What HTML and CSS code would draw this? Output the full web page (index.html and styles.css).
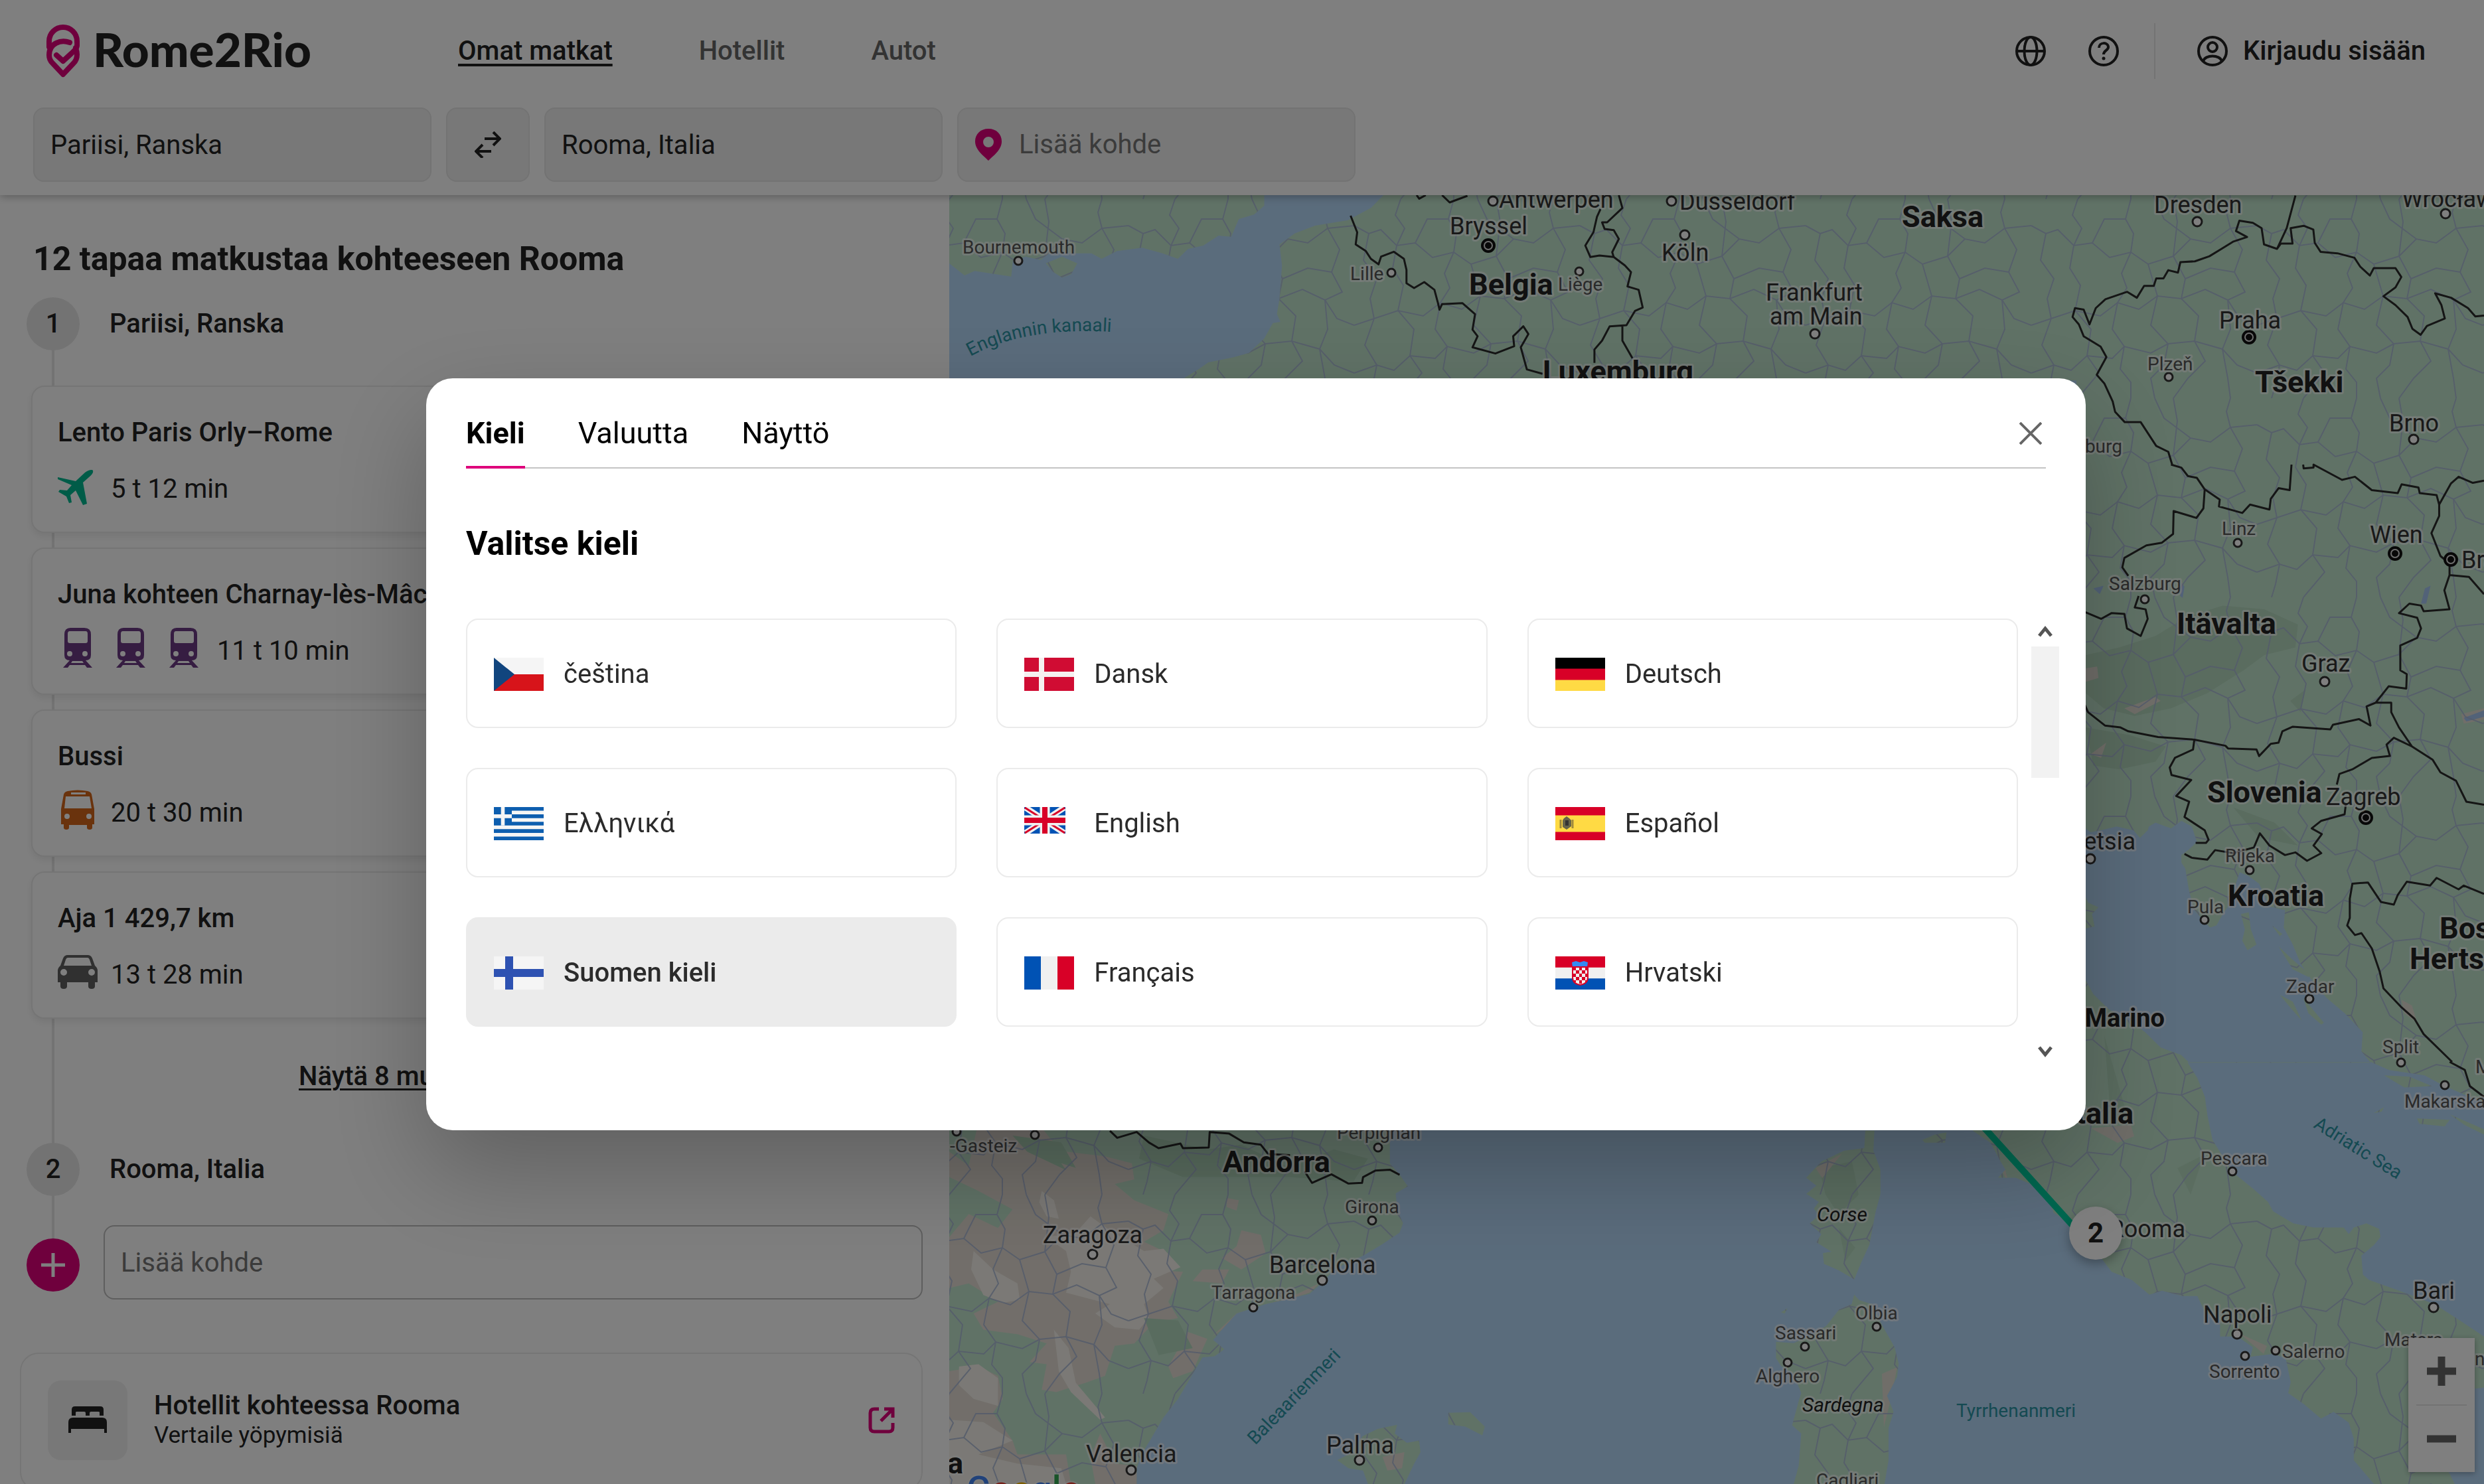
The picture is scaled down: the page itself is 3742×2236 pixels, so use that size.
FILE: index.html
```html
<!DOCTYPE html>
<html lang="fi">
<head>
<meta charset="utf-8">
<meta name="viewport" content="width=device-width, initial-scale=1">
<title>Rome2Rio: Pariisi – Rooma</title>
<link rel="stylesheet" href="styles.css">
</head>
<body>
<div class="app">
  <header class="header">
    <div class="topbar">
      <a class="logo" href="#">
        <svg class="logo-pin" viewBox="0 0 50 80" aria-hidden="true"><g fill="none" stroke="#de007b" stroke-width="8" stroke-linecap="round" stroke-linejoin="round"><path d="M4 34C3 31 4 28 4 25A21 21 0 0 1 46 25C46 29 47 31 45 35C43 39 40 41 37 44L25 55L15 46"/><path d="M35 27C22 22 4 28 4 46C4 52 6 55 9 58L25 75L41 58C45 54 46 50 46 45C46 41 45 38 44 35"/></g></svg>
        <span>Rome2Rio</span>
      </a>
      <nav class="nav">
        <a class="active" href="#">Omat matkat</a>
        <a href="#">Hotellit</a>
        <a href="#">Autot</a>
      </nav>
      <div class="tools">
        <button class="icon-button" aria-label="Kieli ja valuutta"><svg viewBox="0 0 48 48"><g fill="none" stroke="#222" stroke-width="4"><circle cx="24" cy="24" r="21"/><ellipse cx="24" cy="24" rx="9.500" ry="21"/><path d="M3 24H45"/></g></svg></button>
        <button class="icon-button" aria-label="Ohje"><svg viewBox="0 0 48 48"><g fill="none" stroke="#222" stroke-width="4"><circle cx="24" cy="24" r="21"/><path d="M17 19C17 10 31 10 31 18C31 23 24 23 24 29"/></g><circle cx="24" cy="35" r="2.500" fill="#222"/></svg></button>
        <span class="divider"></span>
        <button class="login"><svg viewBox="0 0 48 48"><g fill="none" stroke="#222" stroke-width="4"><circle cx="24" cy="24" r="21"/><circle cx="24" cy="18" r="7"/><path d="M10 39C13 29 35 29 38 39"/></g></svg>Kirjaudu sisään</button>
      </div>
    </div>
    <form class="search">
      <input class="field" type="text" aria-label="Lähtöpaikka" value="Pariisi, Ranska">
      <button class="swap" type="button" aria-label="Vaihda suunta"><svg viewBox="0 0 40 40"><path d="M15 11H38M28 1L38 11L28 21M25 30H2M12 20L2 30L12 40" fill="none" stroke="#222" stroke-width="4"/></svg></button>
      <input class="field" type="text" aria-label="Määränpää" value="Rooma, Italia">
      <label class="field field-add"><svg viewBox="0 0 42 48" aria-hidden="true"><path fill="#de007b" fill-rule="evenodd" d="M21 0C9 0 1 8 1 19C1 32 14 41 21 48C28 41 41 32 41 19C41 8 33 0 21 0ZM21 12A8 8 0 1 1 21 28A8 8 0 1 1 21 12Z"/></svg><input type="text" placeholder="Lisää kohde" aria-label="Lisää kohde"></label>
    </form>
  </header>

  <div class="content">
    <main class="panel">
      <h1>12 tapaa matkustaa kohteeseen Rooma</h1>
      <div class="timeline">
        <div class="stop"><span class="bullet">1</span>Pariisi, Ranska</div>
        <ul class="routes">
          <li class="route"><h2>Lento Paris Orly–Rome</h2>
            <p><svg viewBox="0 0 60 60"><path fill="#00b890" d="M0 12L27 18L41 5C46 1 52 0 53 2C54 5 51 9 47 12L38 20L44 52L38 54L27 32L19 39L21 50L17 51L13 41L1 34L3 31L14 32L21 24L0 15Z"/></svg>5 t 12 min</p></li>
          <li class="route"><h2>Juna kohteen Charnay-lès-Mâcon</h2>
            <p>
              <svg viewBox="0 0 60 60"><path fill="#6c3a84" fill-rule="evenodd" d="M19-5H40Q50-5 50 5V36Q50 44 42 44L52 55H44L41 51H18L15 55H8L18 44Q10 44 10 36V5Q10-5 19-5ZM18 0Q15 0 15 4V15Q15 18 18 18H42Q45 18 45 15V4Q45 0 42 0ZM18 30A4 4 0 1 0 18 38A4 4 0 1 0 18 30ZM41 30A4 4 0 1 0 41 38A4 4 0 1 0 41 30ZM22 45L20 48H39L37 45Z"/></svg>
              <svg viewBox="0 0 60 60"><path fill="#6c3a84" fill-rule="evenodd" d="M19-5H40Q50-5 50 5V36Q50 44 42 44L52 55H44L41 51H18L15 55H8L18 44Q10 44 10 36V5Q10-5 19-5ZM18 0Q15 0 15 4V15Q15 18 18 18H42Q45 18 45 15V4Q45 0 42 0ZM18 30A4 4 0 1 0 18 38A4 4 0 1 0 18 30ZM41 30A4 4 0 1 0 41 38A4 4 0 1 0 41 30ZM22 45L20 48H39L37 45Z"/></svg>
              <svg viewBox="0 0 60 60"><path fill="#6c3a84" fill-rule="evenodd" d="M19-5H40Q50-5 50 5V36Q50 44 42 44L52 55H44L41 51H18L15 55H8L18 44Q10 44 10 36V5Q10-5 19-5ZM18 0Q15 0 15 4V15Q15 18 18 18H42Q45 18 45 15V4Q45 0 42 0ZM18 30A4 4 0 1 0 18 38A4 4 0 1 0 18 30ZM41 30A4 4 0 1 0 41 38A4 4 0 1 0 41 30ZM22 45L20 48H39L37 45Z"/></svg>
              11 t 10 min</p></li>
          <li class="route"><h2>Bussi</h2>
            <p><svg viewBox="0 0 60 60"><path fill="#d4661a" fill-rule="evenodd" d="M9 2Q10-2 15-3Q30-6 45-3Q50-2 51 2L55 24V47H52V52Q52 55 48 55Q44 55 44 52V48H17V52Q17 55 13 55Q9 55 9 52V47H5V24ZM20-1V2H42V-1ZM12 5L10 23H51L48 5ZM14 31A4 4 0 1 0 14 39A4 4 0 1 0 14 31ZM47 31A4 4 0 1 0 47 39A4 4 0 1 0 47 31Z"/></svg>20 t 30 min</p></li>
          <li class="route"><h2>Aja 1 429,7 km</h2>
            <p><svg viewBox="0 0 60 60"><path fill="#606060" fill-rule="evenodd" d="M15 0H45Q50 0 52 5L56 16Q60 19 60 24V41H56V47Q56 51 51 51Q46 51 46 47V41H14V47Q14 51 9 51Q4 51 4 47V41H0V24Q0 19 4 16L8 5Q10 0 15 0ZM15 4Q13 4 12 7L9 16H51L48 7Q47 4 45 4ZM9 21A5 5 0 1 0 9 31A5 5 0 1 0 9 21ZM51 21A5 5 0 1 0 51 31A5 5 0 1 0 51 21Z"/></svg>13 t 28 min</p></li>
        </ul>
        <a class="more" href="#">Näytä 8 muuta vaihtoehtoa</a>
        <div class="stop"><span class="bullet">2</span>Rooma, Italia</div>
        <div class="add-stop">
          <button class="add" aria-label="Lisää kohde"><svg viewBox="0 0 36 36"><path d="M18 0V36M0 18H36" stroke="#fff" stroke-width="5"/></svg></button>
          <input type="text" placeholder="Lisää kohde" aria-label="Uusi kohde">
        </div>
      </div>
      <a class="hotel" href="#">
        <span class="hotel-tile"><svg viewBox="0 0 60 42"><path fill="#222" d="M6 14V5Q6 0 11 0H49Q54 0 54 5V14H48V9Q48 8 46 8H35Q33 8 33 10V14H27V10Q27 8 25 8H14Q12 8 12 9V14ZM8 17H52Q59 17 59 24V40H55V34H5V40H1V24Q1 17 8 17Z"/></svg></span>
        <span class="hotel-text"><strong>Hotellit kohteessa Rooma</strong><span>Vertaile yöpymisiä</span></span>
        <svg class="external" viewBox="0 0 40 40"><path d="M16 3H9Q3 3 3 9V31Q3 37 9 37H31Q37 37 37 31V24M24 3H37V16M37 3L19 21" fill="none" stroke="#de007b" stroke-width="5"/></svg>
      </a>
    </main>

    <section class="map" aria-label="Kartta">
      <svg class="map-canvas" viewBox="1430 294 2312 1942" preserveAspectRatio="xMinYMin slice">
        <defs>
          <clipPath id="land">
            <path transform="translate(1430 290) scale(.7653 .3333)" d="M0 0H620V60L600 100L570 120L555 200L530 195L500 240L470 255L450 300L420 275L380 250L330 265L300 300L280 275L250 275L200 270L180 305L150 290L125 310L122 380L50 355L30 375L0 320ZM190 320L222 290L252 320L240 370L222 385L205 360ZM860 0L830 70L785 125L720 150L680 185L650 235L655 330L650 480L645 550L652 585L637 590L620 660L590 725L560 745L510 768L490 800L455 850L2222 850V0Z"/>
            <path transform="translate(3130 700) scale(.3903 .574)" clip-rule="evenodd" d="M-5-710H1580V1569H-5ZM20 950L50 965L100 958L150 950L215 960L240 980L270 960L275 950L300 940L360 955L400 935L440 950L460 990L430 1010L400 1025L400 1045L415 1060L430 1120L450 1170L510 1215L535 1210L560 1180L590 1150L610 1100L625 1070L660 1080L700 1100L740 1160L800 1170L795 1215L830 1260L860 1310L900 1350L960 1400L1030 1440L1100 1490L1095 1540L1130 1570H430L400 1550L320 1530L260 1490L200 1460L120 1430L60 1390L20 1340V1220L65 1212L55 1180L80 1162L40 1150L20 1120Z"/>
            <path transform="translate(3130 700) scale(.3903 .574)" d="M630 1180L660 1175L668 1220L690 1260L655 1275L635 1250L645 1220ZM750 1210L790 1232L780 1238ZM775 1265L830 1300L900 1340L890 1345L830 1325ZM780 1392L830 1410L865 1460L820 1425ZM870 1400L950 1465L940 1470L890 1440Z"/>
            <path transform="translate(2550 1600) scale(.7602 .4056)" d="M555 0H980L1000 60L1015 130L1020 200L1030 290L1050 350L1070 410L1110 470L1140 520L1150 555L1190 600L1230 615L1290 615L1300 640L1310 615L1335 600L1360 620L1363 650L1350 680L1325 720L1328 790L1340 810L1400 850L1470 900L1520 960L1568 1020V1210L1520 1220L1470 1300L1450 1400L1500 1530L1510 1568H1350L1310 1480L1310 1400L1300 1340L1270 1300L1245 1325L1210 1270L1180 1230L1185 1190L1175 1100L1150 1085L1105 1095L1110 1060L1080 1020L1045 1020V960L1015 930L1000 870H970L930 850L905 865L870 810L830 780L790 680L740 590L715 560L710 530L690 470L640 430L605 430L620 400L610 370L590 300L555 256ZM342 256H360L358 330L372 400V490L362 560L350 680L335 740L320 808L290 775L260 750L258 710L275 705L245 670L255 640L232 600L250 570L240 545L250 520L225 490L245 460L225 430L240 400L255 370L300 330L340 320ZM320 865L330 885L355 900L370 960L385 1010L400 1060L408 1120L405 1170L385 1240L398 1300L388 1360V1480L380 1568H200L210 1500L215 1380L197 1350L210 1260L215 1230L200 1160L175 1130L165 1100V1040L200 1045L240 1010L265 980L290 920L315 900ZM455 290L480 270L503 262L500 300L460 300ZM1343 0H1568V150L1540 130L1490 90L1450 50L1380 30ZM1370 50L1420 55L1465 90L1410 95ZM1435 210L1500 215L1490 240L1440 230ZM1500 195L1568 250V270L1530 235ZM1350 190L1370 168L1365 185ZM175 930L188 915L182 935Z"/>
            <path transform="translate(1430 1690) scale(.7334 .3482)" d="M0 0H905V180L925 230L942 280L917 310L920 380L932 440L925 480L890 530L850 580L790 640L770 690L740 745L650 790L590 830L560 900L542 945L565 985L545 1015L520 1020L495 1110L470 1200L440 1280L415 1370L395 1440L385 1500V1568H0ZM850 1360L880 1330L920 1312L915 1350L940 1390L965 1380L968 1430L955 1480L935 1568H860L850 1510L820 1500L797 1465L820 1440ZM1025 1260L1070 1257L1100 1320L1095 1358L1060 1320L1025 1310Z"/>
          </clipPath>
          <pattern id="roads" width="340" height="300" patternUnits="userSpaceOnUse">
            <g fill="none" stroke="#a9b8d6" stroke-width="2" opacity=".85">
              <path d="M0 40L22 52L40 46L64 70L92 66L118 88L150 80L176 98L214 86L240 60L270 66L300 44L340 40"/>
              <path d="M70 0L62 24L76 44L64 70L58 104L74 130L66 168L90 196L84 236L102 262L70 300"/>
              <path d="M214 0L220 34L214 86L232 120L226 150L252 176L246 214L262 244L236 270L214 300"/>
              <path d="M0 190L30 180L66 168L104 176L130 156L162 166L190 146L226 150L262 136L296 152L314 180L340 190"/>
              <path d="M150 0L142 30L154 52L150 80L136 112L144 134L130 156L122 196L140 222L134 256L150 276L150 300"/>
              <path d="M0 262L34 250L60 258L84 236L122 240L140 222L180 232L206 218L246 214L288 226L310 250L340 262"/>
              <path d="M300 0L294 20L300 44L318 76L306 110L322 140L296 152L300 196L288 226L296 270L300 300"/>
              <path d="M22 52L14 92L34 120L24 150L30 180L16 220L34 250L28 280L22 300"/>
              <path d="M176 98L190 146L180 190L206 218L200 250L180 270L186 300M186 0L200 30L240 60M92 66L110 30L142 30M232 120L270 104L306 110"/>
            </g>
          </pattern>
        </defs>

        <rect x="1430" y="294" width="2312" height="1942" fill="#b5d8f8"/>
        <g clip-path="url(#land)">
          <rect x="1430" y="290" width="2312" height="1946" fill="#c1e5cd"/>
          <g transform="translate(1430 1690) scale(.7334 .3482)">
            <path fill="#e4ddd4" d="M60 0H180L210 80L240 130L320 150L375 180L380 250L340 270L380 340L450 400L440 470L400 520L440 560L410 640L480 650L450 780L470 850L420 870L380 960L340 970L320 1100L280 1130L220 1170L190 1160L200 1050L165 1040L200 960L140 920L70 900L50 830L100 780L40 700L0 720V500L40 400L100 460L130 380L60 300L0 240V130L40 190ZM600 470L640 490L650 570L600 640L560 590L590 540ZM520 640L575 640L560 700L500 690ZM490 910L530 940L500 1080L460 1110L450 1060ZM590 830L700 760L760 700L740 740L650 800L560 900L540 930ZM890 1450L935 1430L930 1500L900 1510ZM0 1080L60 1060L100 1100L110 1200L90 1260L130 1380L140 1440L240 1440L250 1568H0ZM310 1350L340 1480L385 1490V1568H300L290 1450ZM570 330L595 340L590 385L570 370Z"/>
            <path fill="#f6f3ec" d="M290 410L330 470L400 560L440 550L475 630L420 680L440 720L400 790L410 850L390 900L340 890L300 830L330 790L240 740L250 650L240 560L200 500L260 480ZM50 560L90 640L140 700L145 770L110 785L70 750L45 640ZM190 300L215 340L225 420L200 410L185 350ZM215 900L245 980L260 1130L320 1280L310 1290L250 1170L225 1080ZM20 1060L60 1050L100 1110L100 1230L50 1200L20 1140ZM0 1290L70 1300L130 1380L60 1440L140 1480L230 1500L240 1568H0Z"/>
            <path fill="#b3d9be" d="M130 60L230 90L260 200L230 180L240 210L160 130ZM400 60L530 120L600 100L700 200L790 120L860 160L830 260L700 240L560 240L480 240L390 160ZM400 850L470 860L500 980L430 1010Z"/>
          </g>
          <g transform="translate(3130 700) scale(.3903 .574)">
            <path fill="#b4d8be" d="M31 500L160 480L300 450L420 400L560 370L720 380L850 420L840 480L720 500L640 540L500 600L360 640L220 660L100 640L31 600ZM31 690L200 710L340 740L300 780L160 800L60 790ZM600 900L760 940L850 1000L700 980ZM820 620L880 590L860 650Z"/>
            <path fill="#e0dcd2" d="M31 535L75 530L80 560L31 570ZM180 640L300 610L320 620L220 655ZM50 760L110 730L90 770ZM1250 1405L1290 1420L1310 1465L1260 1440ZM1480 655L1568 640V670L1490 680Z"/>
            <path fill="#a5c4f0" d="M1325 365L1340 325L1362 318L1345 365ZM60 325L100 318L85 340ZM1490 665L1568 645V662L1500 674ZM400 310L412 320L405 350L395 345Z"/>
          </g>
          <path fill="#b6dbc1" d="M2740 1760L2790 1750L2800 1800L2770 1830L2750 1800ZM2770 1850L2795 1880L2780 1900ZM3170 1560L3210 1700L3180 1690ZM3280 1760L3320 1740L3300 1800Z"/>
          <path fill="#e0dcd2" d="M2993 1720L3020 1760L3028 1790L3010 1750ZM3150 1700L3210 1695L3215 1712L3190 1722ZM2735 1760L2775 1738L2745 1775ZM3375 2010L3415 2028L3410 2040ZM2835 2070L2858 2060L2848 2110L2838 2150Z"/>
          <rect x="1430" y="290" width="2312" height="1946" fill="url(#roads)"/>
        </g>

        <g class="borders">
          <path transform="translate(1430 290) scale(.7653 .3333)" d="M790 105L803 180L800 235L820 265L830 300L845 325L850 290L875 268L895 300L900 350V410L915 432L935 405L955 440L962 500L965 530L970 505L1010 500L1035 550L1030 620L1040 650L1030 700L1075 728L1112 695L1110 650L1130 605L1140 640L1125 700L1137 800L1168 820M920 12L925 28L938 12M970 12L985 45L1020 15M1318 12L1325 70L1295 135L1285 135L1290 165L1308 170L1318 210L1305 270L1308 292L1280 285L1262 292L1252 240L1268 180L1275 110L1282 75M1308 292L1330 330L1342 360L1335 425L1357 440L1365 520L1350 535L1333 600L1300 605L1285 670L1270 710V770M1325 600V670L1345 750"/>
          <path transform="translate(2600 0) scale(.7283 .4464)" d="M1178 660L1160 770L1140 840L1113 825L1108 770L1090 752L1062 745L1055 780L1078 800L1050 815L1025 840L1000 865L970 882L940 885L935 920L915 912L905 940L890 940L885 965L865 965L850 1005L830 985L785 1010L765 1040L752 1095L740 1045L722 1040L717 1070L730 1095L740 1135L775 1170L787 1205L767 1265L783 1295L800 1355L805 1390L825 1425H858L890 1505L915 1525L923 1568M1140 840L1148 822H1172L1168 770L1195 762L1215 775L1218 820L1230 850L1265 855L1300 870L1312 900L1332 930L1340 905L1385 905L1397 935L1385 970L1360 1000L1385 1030L1410 1070L1420 1110L1437 1130L1450 1100L1487 1075L1480 1030L1467 990L1500 1005L1535 1040L1550 1068L1568 1065"/>
          <path transform="translate(3130 700) scale(.3903 .574)" d="M360 0L400 8L425 30L460 35L490 65L548 92L545 110L635 127L665 105L740 118L745 90L775 62L818 67L825 0M870 0L872 10L910 8V0L1020 40L1070 32L1135 67L1235 75L1250 52L1315 60L1320 75L1385 80L1395 105V135L1365 180L1400 240L1435 260V290L1415 330L1435 380L1335 385L1325 370L1280 365L1240 390L1310 402L1325 430L1310 455L1245 475V540L1270 550L1268 588L1200 582L1150 625L1115 635L1130 685L1085 668L985 683L975 695L830 688L790 700L775 730L745 733L700 765L690 748L580 745L570 738L450 722L310 715L195 700L165 690L105 685L40 650L20 620M1395 105L1440 50L1470 32L1525 48L1568 42M1435 290L1510 295L1568 340M490 65L485 115L458 140L370 122L368 182L325 205L265 212L180 245L172 270L195 292M235 345L220 375L262 380L270 405L243 450L190 430L180 392L130 390L90 405L20 385M450 722L445 748L375 770L355 795L362 815L438 828L380 870L430 885L412 925L490 960L505 985L495 993H455M412 1022L440 1032L500 1037L530 1012L600 1020L680 1005L703 968L740 1000L800 1025L840 1018L885 1040L940 1020L910 1000L942 970L903 955L940 935L1030 918L1035 890M1000 840L1010 812L1060 800L1135 770L1205 765L1192 735L1220 717L1290 740L1370 775L1400 808L1460 830L1500 885L1568 893M1150 625H1210V650L1240 690L1290 740M1568 1127L1490 1105L1470 1115L1385 1085L1360 1105L1270 1095L1235 1130L1220 1155L1170 1148L1120 1097L1060 1100L1050 1140V1190L1040 1210L1070 1235L1095 1230L1135 1270L1165 1330L1180 1375L1250 1425L1300 1455L1335 1495L1445 1568"/>
          <path transform="translate(2550 1600) scale(.7602 .4056)" d="M1500 0L1530 30L1540 90L1568 130"/>
          <path transform="translate(1430 1690) scale(.7334 .3482)" d="M330 40L345 70L385 45L410 90L430 115L475 95L480 115L533 112L535 45L575 52L605 90L640 100L655 140L700 145M730 215L745 265L785 228L820 268L848 265L850 240L875 212L905 208L925 230"/>
        </g>

        <path d="M2960 1667L3150 1877" stroke="#00d2a2" stroke-width="10"/>

        <g class="dots">
          <circle cx="1534" cy="393" r="6"/><circle cx="2096" cy="411" r="6"/><circle cx="2379" cy="409" r="6"/><circle cx="2249" cy="303" r="7"/><circle cx="2518" cy="303" r="7"/><circle cx="2538" cy="354" r="7"/>
          <circle cx="3310" cy="334" r="7"/><circle cx="3684" cy="322" r="7"/><circle cx="2734" cy="503" r="7"/><circle cx="3267" cy="568" r="6"/><circle cx="3636" cy="662" r="7"/><circle cx="3371" cy="818" r="6"/><circle cx="3231" cy="903" r="6"/><circle cx="3502" cy="1027" r="7"/><circle cx="3149" cy="1294" r="7"/><circle cx="3389" cy="1311" r="6"/><circle cx="3321" cy="1386" r="6"/><circle cx="3479" cy="1505" r="6"/><circle cx="3617" cy="1601" r="6"/><circle cx="3683" cy="1635" r="6"/><circle cx="3363" cy="1765" r="6"/><circle cx="2827" cy="1999" r="6"/><circle cx="2719" cy="2029" r="6"/><circle cx="2693" cy="2053" r="6"/><circle cx="3370" cy="2010" r="7"/><circle cx="3666" cy="1970" r="7"/><circle cx="3428" cy="2035" r="6"/><circle cx="3382" cy="2043" r="6"/>
          <circle cx="1441" cy="1705" r="6"/><circle cx="1559" cy="1710" r="6"/><circle cx="2076" cy="1729" r="6"/><circle cx="2067" cy="1839" r="6"/><circle cx="1646" cy="1890" r="7"/><circle cx="1992" cy="1929" r="7"/><circle cx="1888" cy="1970" r="6"/><circle cx="1704" cy="2215" r="7"/><circle cx="2048" cy="2200" r="7"/>
        </g>
        <g class="capitals">
          <circle cx="2242" cy="370" r="9"/><circle cx="3388" cy="508" r="9"/><circle cx="3608" cy="834" r="9"/><circle cx="3692" cy="843" r="9"/><circle cx="3564" cy="1232" r="9"/>
        </g>
        <g class="capital-cores">
          <circle cx="2242" cy="370" r="5"/><circle cx="3388" cy="508" r="5"/><circle cx="3608" cy="834" r="5"/><circle cx="3692" cy="843" r="5"/><circle cx="3564" cy="1232" r="5"/>
        </g>

        <g class="town">
          <text x="1450" y="382">Bournemouth</text><text x="2034" y="422">Lille</text><text x="2347" y="438">Liège</text><text x="3235" y="558">Plzeň</text><text x="3197" y="682" text-anchor="end">Regensburg</text><text x="3347" y="806">Linz</text><text x="3177" y="889">Salzburg</text>
          <text x="3352" y="1299">Rijeka</text><text x="3295" y="1376">Pula</text><text x="3444" y="1496">Zadar</text><text x="3589" y="1587">Split</text><text x="3622" y="1669">Makarska</text><text x="3729" y="1617">Mostar</text><text x="3315" y="1755">Pescara</text>
          <text x="2795" y="1988">Olbia</text><text x="2674" y="2018">Sassari</text><text x="2645" y="2083">Alghero</text><text x="2736" y="2240">Cagliari</text><text x="3438" y="2046">Salerno</text><text x="3328" y="2076">Sorrento</text><text x="3592" y="2028">Matera</text><text x="3728" y="2057">nto</text>
          <text x="1431" y="1736">-Gasteiz</text><text x="2014" y="1716">Perpignan</text><text x="2026" y="1828">Girona</text><text x="1825" y="1957">Tarragona</text>
        </g>
        <g class="island"><text x="2737" y="1840">Corse</text><text x="2715" y="2127">Sardegna</text></g>
        <g class="city">
          <text x="2184" y="353">Bryssel</text><text x="2258" y="313">Antwerpen</text><text x="2530" y="316">Düsseldorf</text><text x="2503" y="393">Köln</text><text x="3245" y="321">Dresden</text><text x="3618" y="312">Wrocław</text><text x="2660" y="453">Frankfurt</text><text x="2666" y="489">am Main</text><text x="3343" y="495">Praha</text><text x="3599" y="650">Brno</text><text x="3570" y="818">Wien</text><text x="3708" y="856">Bratislava</text><text x="3467" y="1012">Graz</text><text x="3504" y="1213">Zagreb</text><text x="3217" y="1280" text-anchor="end">Venetsia</text>
          <text x="3292" y="1864" text-anchor="end">Rooma</text><text x="3319" y="1993">Napoli</text><text x="3635" y="1957">Bari</text><text x="1571" y="1873">Zaragoza</text><text x="1912" y="1918">Barcelona</text><text x="1636" y="2203">Valencia</text><text x="1998" y="2190">Palma</text>
        </g>
        <g class="country">
          <text x="2865" y="342">Saksa</text><text x="2213" y="444">Belgia</text><text x="2324" y="575">Luxemburg</text><text x="3397" y="591">Tšekki</text><text x="3279" y="955">Itävalta</text><text x="3325" y="1209">Slovenia</text><text x="3356" y="1365">Kroatia</text><text x="3675" y="1414">Bosnia ja</text><text x="3630" y="1460">Hertsegovina</text><text x="3214" y="1693" text-anchor="end">Italia</text><text x="1842" y="1766">Andorra</text><text x="1451" y="2220" text-anchor="end">Espanja</text>
          <text class="microstate" x="3261" y="1547" text-anchor="end">San Marino</text>
        </g>
        <g class="sea">
          <path id="channel" d="M1462 537Q1550 488 1700 502" fill="none"/>
          <text><textPath href="#channel">Englannin kanaali</textPath></text>
          <text transform="translate(3484 1698) rotate(32)">Adriatic Sea</text>
          <text transform="translate(1891 2178) rotate(-46)">Baleaarienmeri</text>
          <text x="2947" y="2135">Tyrrhenanmeri</text>
        </g>
        <text class="google" x="1456" y="2262"><tspan fill="#4285f4">G</tspan><tspan fill="#ea4335">o</tspan><tspan fill="#fbbc05">o</tspan><tspan fill="#4285f4">g</tspan><tspan fill="#34a853">l</tspan><tspan fill="#ea4335">e</tspan></text>
        <circle class="pin" cx="3157" cy="1858" r="40"/>
        <text class="pin-label" x="3157" y="1872">2</text>
      </svg>
      <div class="zoom">
        <button aria-label="Lähennä"><svg viewBox="0 0 44 44"><path d="M22 0V44M0 22H44" stroke="#666" stroke-width="11"/></svg></button>
        <button aria-label="Loitonna"><svg viewBox="0 0 44 44"><path d="M0 22H44" stroke="#666" stroke-width="11"/></svg></button>
      </div>
    </section>
  </div>
</div>

<div class="overlay">
  <section class="modal" role="dialog" aria-modal="true" aria-label="Asetukset">
    <div class="modal-head">
      <div class="tabs" role="tablist">
        <button class="tab active" role="tab" aria-selected="true">Kieli</button>
        <button class="tab" role="tab">Valuutta</button>
        <button class="tab" role="tab">Näyttö</button>
      </div>
      <button class="close" aria-label="Sulje"><svg viewBox="0 0 34 34"><path d="M1 1L33 33M33 1L1 33" stroke="#666" stroke-width="4"/></svg></button>
    </div>
    <h2>Valitse kieli</h2>
    <div class="languages">
      <div class="grid">
        <button class="language"><svg class="flag" viewBox="0 0 75 50"><path fill="#f5f5f5" d="M0 0H75V25H0Z"/><path fill="#d7141a" d="M0 25H75V50H0Z"/><path fill="#11457e" d="M0 0L31 25L0 50Z"/></svg>čeština</button>
        <button class="language"><svg class="flag" viewBox="0 0 75 50"><path fill="#d00c33" d="M0 0H75V50H0Z"/><path stroke="#f5f0f0" stroke-width="8" d="M26 0V50M0 25H75"/></svg>Dansk</button>
        <button class="language"><svg class="flag" viewBox="0 0 75 50"><path d="M0 0H75V17H0Z"/><path fill="#d80027" d="M0 16.500H75V34H0Z"/><path fill="#ffda44" d="M0 33.500H75V50H0Z"/></svg>Deutsch</button>
        <button class="language"><svg class="flag" viewBox="0 0 75 50"><path fill="#f5f5f5" d="M0 0H75V50H0Z"/><path fill="#0d5eaf" d="M0 0H75V5.500H0ZM0 11.100H75V16.700H0ZM0 22.200H75V27.800H0ZM0 33.300H75V38.900H0ZM0 44.500H75V50H0ZM0 0H27V27.800H0Z"/><path stroke="#f5f5f5" stroke-width="5.600" d="M13.500 0V27.800M0 13.900H27"/></svg>Ελληνικά</button>
        <button class="language"><svg class="flag" viewBox="0 0 75 50"><path fill="#0052b4" d="M0 0H62V40H0Z"/><path stroke="#f0f0f0" stroke-width="9" d="M2 1L60 39M60 1L2 39"/><path stroke="#d80027" stroke-width="3" d="M1 1L61 39M61 1L1 39"/><path stroke="#f0f0f0" stroke-width="15" d="M31 0V40M0 20H62"/><path stroke="#d80027" stroke-width="8" d="M31 0V40M0 20H62"/><path fill="#fff" d="M62 0H75V50H0V40H62Z"/></svg>English</button>
        <button class="language"><svg class="flag" viewBox="0 0 75 50"><path fill="#d80027" d="M0 0H75V50H0Z"/><path fill="#ffda44" d="M0 12.500H75V37.500H0Z"/><path fill="#66644a" d="M13 17L17 14L21 17L24 20V29L17 34L11 30V20Z"/><path stroke="#a08a3c" stroke-width="3" d="M8 19V32M26 19V32"/><path fill="#333" d="M15 20H20V28H15Z"/></svg>Español</button>
        <button class="language selected"><svg class="flag" viewBox="0 0 75 50"><path fill="#f5f5f5" d="M0 0H75V50H0Z"/><path stroke="#2e52b2" stroke-width="12" d="M23 0V50M0 25H75"/></svg>Suomen kieli</button>
        <button class="language"><svg class="flag" viewBox="0 0 75 50"><path fill="#f0f0f0" d="M0 0H75V50H0Z"/><path fill="#0052b4" d="M0 0H25V50H0Z"/><path fill="#d80027" d="M50 0H75V50H50Z"/></svg>Français</button>
        <button class="language"><svg class="flag" viewBox="0 0 75 50"><path fill="#f0f0f0" d="M0 0H75V50H0Z"/><path fill="#d80027" d="M0 0H75V16.700H0Z"/><path fill="#0052b4" d="M0 33.300H75V50H0Z"/><path fill="#338af3" d="M25 9L31 7L37 9L43 7L49 9L48 16H26Z"/><path fill="#f0f0f0" stroke="#d80027" stroke-width="2" d="M26 16H49V32Q49 41 37.500 43Q26 41 26 32Z"/><path fill="#d80027" d="M26 16H31V21H26ZM36 16H40V21H36ZM45 16H49V21H45ZM31 21H36V26H31ZM40 21H45V26H40ZM26 26H31V31H26ZM36 26H40V31H36ZM45 26H49V31H45ZM31 31H36V36H31ZM40 31H45V36H40ZM36 36H40V41H36ZM27 36H31V39H27ZM45 36H48V39H45Z"/></svg>Hrvatski</button>
      </div>
      <div class="scrollbar">
        <svg viewBox="0 0 24 18"><path d="M3 16L12 5L21 16" fill="none" stroke="#555" stroke-width="5"/></svg>
        <span class="thumb"></span>
        <svg class="down" viewBox="0 0 24 18"><path d="M3 2L12 13L21 2" fill="none" stroke="#555" stroke-width="5"/></svg>
      </div>
    </div>
  </section>
</div>
</body>
</html>
```
FILE: styles.css
```css
* { box-sizing: border-box; }

body {
  margin: 0;
  height: 100vh;
  overflow: hidden;
  font-family: Roboto, "Noto Sans", sans-serif;
  font-size: 40px;
  line-height: 50px;
  color: #222;
  background: #fff;
}

button, input { font: inherit; color: inherit; }
button { padding: 0; border: 0; background: none; }
a { color: inherit; text-decoration: none; }
h1, h2, p, ul { margin: 0; padding: 0; }
svg { display: block; flex: none; }

.app { display: flex; flex-direction: column; height: 100vh; }

/* Header */
.header {
  position: relative;
  z-index: 1;
  background: #fff;
  box-shadow: 0 2px 12px rgba(0, 0, 0, .3);
}
.topbar { display: flex; align-items: center; height: 154px; padding: 0 88px 0 70px; }
.logo {
  display: flex;
  align-items: flex-start;
  gap: 20px;
  font: 900 71px/74px Lato, sans-serif;
  min-width: 620px;
}
.logo-pin { width: 50px; height: 80px; }
.nav { display: flex; gap: 130px; font-weight: 500; color: #666; }
.nav .active { color: #222; text-decoration: underline; text-decoration-thickness: 4px; text-underline-offset: 6px; }
.tools { display: flex; align-items: center; margin-left: auto; font-weight: 500; }
.tools svg { width: 48px; height: 48px; }
.icon-button { margin-right: 62px; }
.divider { width: 2px; height: 84px; margin-right: 62px; background: #e6e6e6; }
.icon-button + .divider { margin-left: -10px; }
.login { display: flex; align-items: center; gap: 22px; }

.search { display: flex; gap: 22px; padding: 8px 50px 20px; }
.field, .swap {
  height: 112px;
  border: 2px solid #e6e6e6;
  border-radius: 16px;
  background: #f0f0f0;
}
.field { width: 600px; padding: 0 24px; }
.swap { display: grid; place-items: center; width: 126px; }
.swap svg { width: 40px; height: 40px; }
.field-add { display: flex; align-items: center; gap: 25px; }
.field-add svg { width: 42px; height: 48px; }
.field-add input { width: 100%; min-width: 0; border: 0; padding: 0; background: none; }
::placeholder { color: #767676; opacity: 1; }

/* Route list */
.content { display: flex; flex: 1; min-height: 0; }
.panel { width: 1430px; flex: none; padding: 66px 40px 0 30px; overflow: hidden; }
.panel h1 { margin-left: 20px; font-size: 50px; line-height: 60px; }
.timeline { position: relative; margin: 28px 0 80px; padding-left: 10px; }
.timeline::before {
  content: "";
  position: absolute;
  top: 40px;
  bottom: 60px;
  left: 48px;
  width: 4px;
  background: #e6e6e6;
}
.stop { position: relative; display: flex; align-items: center; gap: 45px; font-weight: 500; }
.bullet {
  display: grid;
  place-items: center;
  width: 80px;
  height: 80px;
  border-radius: 50%;
  background: #e6e6e6;
}
.routes { position: relative; display: grid; gap: 22px; margin: 53px 0 57px 7px; list-style: none; }
.route {
  padding: 44px 38px 34px;
  border: 2px solid #ebebeb;
  border-radius: 20px;
  background: #fff;
  box-shadow: 0 5px 12px rgba(0, 0, 0, .08);
}
.route h2 { margin-bottom: 30px; font-size: 40px; font-weight: 500; line-height: 50px; }
.route p { display: flex; align-items: center; gap: 20px; height: 60px; }
.route svg { width: 60px; height: 60px; overflow: visible; }
.more {
  display: table;
  margin: 0 auto 70px 410px;
  font-weight: 500;
  line-height: 60px;
  text-decoration: underline;
  text-decoration-thickness: 3px;
  text-underline-offset: 5px;
}
.add-stop { position: relative; display: flex; align-items: center; gap: 36px; margin-top: 44px; }
.add {
  display: grid;
  place-items: center;
  flex: none;
  width: 80px;
  height: 80px;
  margin-top: 8px;
  border-radius: 50%;
  background: #de007b;
}
.add svg { width: 36px; height: 36px; }
.add-stop input {
  flex: 1;
  min-width: 0;
  height: 112px;
  padding: 0 24px;
  border: 2px solid #bdbdbd;
  border-radius: 16px;
  background: #fff;
}
.hotel {
  display: flex;
  align-items: center;
  gap: 40px;
  padding: 40px 40px 44px;
  border: 2px solid #ebebeb;
  border-radius: 28px;
}
.hotel-tile { display: grid; place-items: center; width: 120px; height: 120px; border-radius: 20px; background: #f0f0f0; }
.hotel-tile svg { width: 60px; height: 42px; }
.hotel-text { flex: 1; font-size: 35px; line-height: 45px; }
.hotel-text strong { display: block; font-size: 40px; font-weight: 500; }
.external { width: 40px; height: 40px; }

/* Map */
.map { position: relative; flex: 1; min-width: 0; overflow: hidden; background: #b5d8f8; }
.map-canvas { width: 100%; height: 100%; }
.map text { stroke: rgba(255, 255, 255, .6); stroke-width: 6px; stroke-linejoin: round; paint-order: stroke; }
.borders path { fill: none; stroke: #2a2a2a; stroke-width: 3px; vector-effect: non-scaling-stroke; stroke-linejoin: round; }
.dots circle { fill: #fff; stroke: #333; stroke-width: 3px; }
.capitals circle { fill: #ddd; stroke: #111; stroke-width: 4px; }
.capital-cores circle { fill: #111; }
.town text { font-size: 28px; fill: #555; }
.island text { font-size: 30px; font-style: italic; fill: #222; }
.city text { font-size: 36px; fill: #333; }
.country text { font-size: 45px; font-weight: 700; fill: #222; }
.country .microstate { font-size: 38px; }
.map .sea text { font-size: 28px; fill: #2b94a4; stroke: none; }
.map .google { font-size: 54px; font-weight: 500; stroke-width: 4px; }
.pin { fill: #fff; filter: drop-shadow(0 6px 8px rgba(0, 0, 0, .3)); }
.map .pin-label { font-size: 42px; font-weight: 700; fill: #222; text-anchor: middle; stroke: none; }
.zoom {
  position: absolute;
  right: 14px;
  bottom: 18px;
  width: 100px;
  padding: 0 12px;
  background: #fff;
  box-shadow: 0 2px 8px rgba(0, 0, 0, .3);
}
.zoom button { display: grid; place-items: center; width: 100%; height: 100px; }
.zoom button + button { border-top: 2px solid #e6e6e6; height: 102px; }
.zoom svg { width: 44px; height: 44px; }

/* Settings dialog */
.overlay {
  position: fixed;
  inset: 0;
  z-index: 2;
  display: flex;
  align-items: center;
  justify-content: center;
  padding: 37px 0 0 42px;
  background: rgba(0, 0, 0, .5);
}
.modal {
  width: 2500px;
  max-width: 100%;
  padding: 56px 60px 93px;
  border-radius: 40px;
  background: #fff;
  color: #000;
  box-shadow: 0 60px 150px rgba(0, 0, 0, .25);
}
.modal-head {
  display: flex;
  align-items: flex-start;
  justify-content: space-between;
  height: 80px;
  border-bottom: 2px solid #c4c4c4;
}
.tabs { display: flex; gap: 80px; }
.tab { height: 80px; padding-bottom: 22px; border-bottom: 4px solid transparent; font-size: 45px; line-height: 54px; }
.tab.active { border-color: #de007b; font-weight: 700; }
.close { padding: 10px 6px; }
.close svg { width: 34px; height: 34px; }
.modal h2 { margin: 83px 0 82px; font-size: 50px; line-height: 61px; }
.languages { display: flex; gap: 20px; height: 678px; margin-right: -20px; overflow: hidden; }
.grid {
  flex: 1;
  display: grid;
  grid-template-columns: repeat(3, 1fr);
  grid-auto-rows: 165px;
  align-content: start;
  gap: 60px;
}
.language {
  display: flex;
  align-items: center;
  gap: 30px;
  padding: 2px 40px 0;
  border: 2px solid #ebebeb;
  border-radius: 18px;
  color: #2b2b2b;
}
.flag { width: 75px; height: 50px; }
.language.selected { background: #ebebeb; font-weight: 500; }
.scrollbar { display: flex; flex-direction: column; align-items: center; width: 42px; padding: 10px 0 16px; }
.scrollbar svg { width: 24px; height: 18px; }
.thumb { width: 42px; height: 198px; margin-top: 14px; background: #f2f2f2; }
.scrollbar .down { margin-top: auto; }
```
